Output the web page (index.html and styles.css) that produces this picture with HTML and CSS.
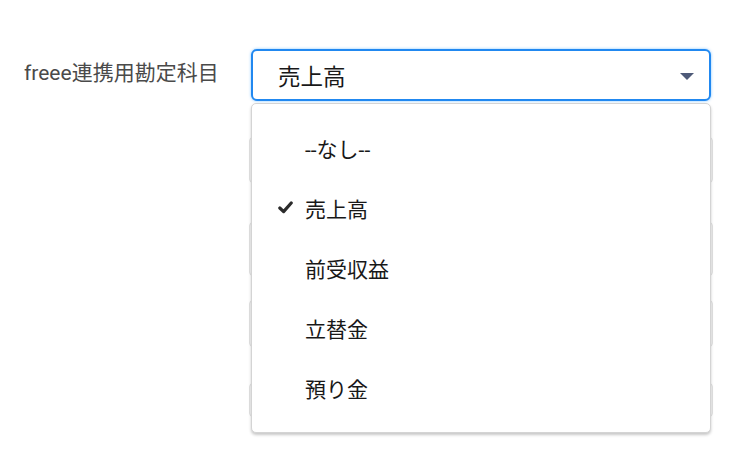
FILE: index.html
```html
<!DOCTYPE html>
<html lang="ja">
<head>
<meta charset="utf-8">
<title>freee連携用勘定科目</title>
<link rel="stylesheet" href="styles.css">
</head>
<body>
<div class="form">
  <div class="row">
    <label class="label">freee連携用勘定科目</label>
    <div class="control">
      <div class="combobox">
        <div class="select">
          <span class="value">売上高</span>
          <span class="arrow"></span>
        </div>
        <ul class="listbox">
          <li class="option">--なし--</li>
          <li class="option selected">
            <svg class="check" viewBox="0 0 15 13" width="15" height="13"><path d="M1.8 7 L5.6 10.6 L13.2 2" fill="none" stroke="#2b2b2b" stroke-width="3.2" stroke-linecap="round" stroke-linejoin="round"/></svg>
            売上高
          </li>
          <li class="option">前受収益</li>
          <li class="option">立替金</li>
          <li class="option">預り金</li>
        </ul>
      </div>
      <div class="ghosts">
        <div class="ghost g1"></div>
        <div class="ghost g2"></div>
        <div class="ghost g3"></div>
        <div class="ghost g4"></div>
      </div>
    </div>
  </div>
</div>
</body>
</html>
```
FILE: styles.css
```css
html, body {
  margin: 0;
  padding: 0;
  background: #ffffff;
}

body {
  min-height: 100vh;
  font-family: Roboto, "Noto Sans CJK JP", "Noto Sans", sans-serif;
  color: #181818;
}

.form {
  padding-top: 49px;
  padding-bottom: 34px;
}

.row {
  display: flex;
  align-items: flex-start;
}

.label {
  box-sizing: border-box;
  width: 251px;
  padding-left: 24px;
  font-size: 21px;
  line-height: 48px;
  color: #4a4a4a;
  white-space: nowrap;
}

.control {
  width: 460px;
}

.combobox {
  position: relative;
}

.select {
  box-sizing: border-box;
  height: 52px;
  display: flex;
  align-items: center;
  padding-left: 25px;
  padding-right: 15px;
  border: 2px solid #2188f0;
  border-radius: 6px;
  box-shadow: 0 0 3px rgba(27, 150, 255, 0.55);
  background: #ffffff;
  font-size: 22.5px;
  color: #181818;
}

.value {
  flex: 1;
}

.arrow {
  width: 0;
  height: 0;
  border-left: 7px solid transparent;
  border-right: 7px solid transparent;
  border-top: 7px solid #4e5a78;
  margin-top: 2px;
}

.listbox {
  position: absolute;
  z-index: 2;
  top: 54px;
  left: 0;
  right: 0;
  box-sizing: border-box;
  margin: 0;
  padding: 14px 0;
  list-style: none;
  background: #ffffff;
  border: 1px solid #d4d4d4;
  border-radius: 5px;
  box-shadow: 0 2px 3px rgba(0, 0, 0, 0.22);
}

.option {
  position: relative;
  height: 60px;
  display: flex;
  align-items: center;
  padding-left: 53px;
  font-size: 21px;
  color: #181818;
}

.check {
  position: absolute;
  left: 26px;
  top: 23px;
}

.ghosts {
  margin-left: -2px;
  width: 464px;
  display: flex;
  flex-direction: column;
}

.ghost {
  box-sizing: border-box;
  border: 1px solid #e2e2e2;
  border-radius: 4px;
  background: #f4f4f4;
}

.g1 {
  margin-top: 36px;
  height: 46px;
}

.g2 {
  margin-top: 39px;
  height: 54px;
}

.g3 {
  margin-top: 24px;
  height: 47px;
}

.g4 {
  margin-top: 36px;
  height: 34px;
}
```
